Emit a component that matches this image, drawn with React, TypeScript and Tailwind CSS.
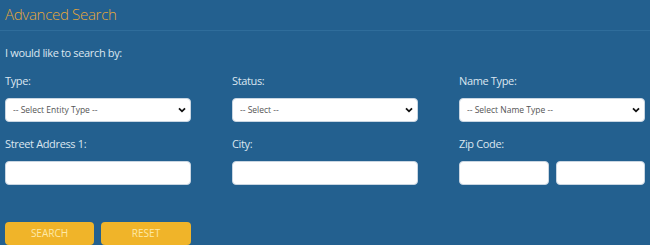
const fieldClass = "block h-[24px] w-full rounded-[4px] border border-[#c9d6e2] bg-white";
const labelClass = "text-[11px] leading-[16px] tracking-[-0.35px] text-[#dbe6ef]";

function Chevron() {
  return (
    <svg className="pointer-events-none absolute right-[5px] top-1/2 -translate-y-1/2" width="8" height="6" viewBox="0 0 8 6">
      <path d="M1 1.3 L4 4.3 L7 1.3" fill="none" stroke="#111" strokeWidth="1.8" />
    </svg>
  );
}

function SelectBox({ placeholder }: { placeholder: string }) {
  return (
    <div className="relative">
      <select className={`${fieldClass} appearance-none pl-[7px] text-[8.5px] text-[#555] outline-none`}>
        <option>{placeholder}</option>
      </select>
      <Chevron />
    </div>
  );
}

export default function App() {
  return (
    <div className="h-[245px] w-[650px] overflow-hidden bg-[#23608f] font-['Open_Sans',sans-serif]">
      <div className="border-b border-[#2f6d9b] px-[5px] pb-[6px] pt-[4px]">
        <h1 className="text-[15px] leading-[20px] font-light tracking-[-0.3px] text-[#e8a838]">Advanced Search</h1>
      </div>

      <div className="px-[5px]">
        <p className={`${labelClass} mt-[14px]`}>I would like to search by:</p>

        <div className="mt-[12px] grid grid-cols-3 gap-x-[41px]">
          <div>
            <p className={labelClass}>Type:</p>
            <div className="mt-[9px]"><SelectBox placeholder="-- Select Entity Type --" /></div>
          </div>
          <div>
            <p className={labelClass}>Status:</p>
            <div className="mt-[9px]"><SelectBox placeholder="-- Select --" /></div>
          </div>
          <div>
            <p className={labelClass}>Name Type:</p>
            <div className="mt-[9px]"><SelectBox placeholder="-- Select Name Type --" /></div>
          </div>
        </div>

        <div className="mt-[14px] grid grid-cols-3 gap-x-[41px]">
          <div>
            <p className={labelClass}>Street Address 1:</p>
            <input className={`${fieldClass} mt-[9px]`} />
          </div>
          <div>
            <p className={labelClass}>City:</p>
            <input className={`${fieldClass} mt-[9px]`} />
          </div>
          <div>
            <p className={labelClass}>Zip Code:</p>
            <div className="mt-[9px] flex gap-[7px]">
              <input className={fieldClass} />
              <input className={fieldClass} />
            </div>
          </div>
        </div>

        <div className="mt-[37px] flex gap-[7px]">
          <button className="h-[23px] w-[89px] rounded-[4px] bg-[#f0b429] text-[10px] text-[#fde9a8]">SEARCH</button>
          <button className="h-[23px] w-[90px] rounded-[4px] bg-[#f0b429] text-[10px] text-[#fde9a8]">RESET</button>
        </div>
      </div>
    </div>
  );
}
